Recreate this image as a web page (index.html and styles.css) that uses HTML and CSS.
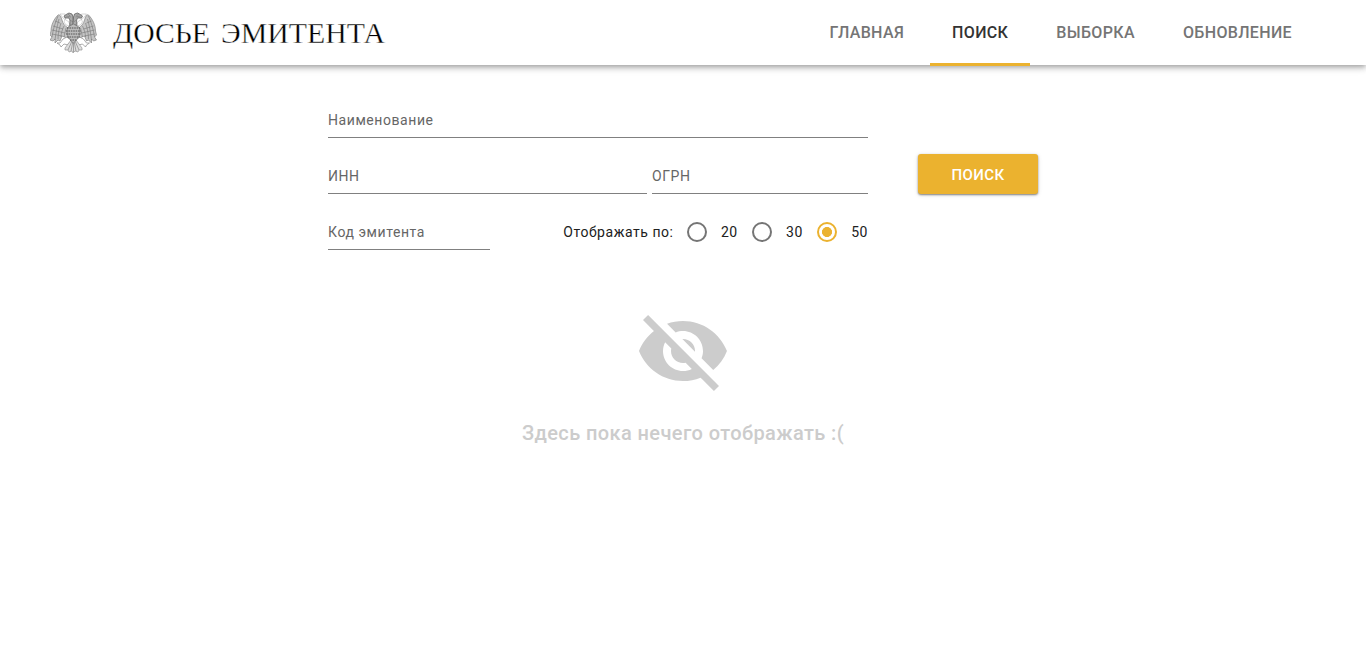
FILE: index.html
```html
<!DOCTYPE html>
<html lang="ru">
<head>
<meta charset="utf-8">
<title>Досье эмитента</title>
<link rel="stylesheet" href="styles.css">
</head>
<body>
<header class="header">
  <a class="brand">
    <svg class="eagle" viewBox="0 0 48 42">
      <defs>
        <g id="half">
          <path class="plume" d="M18 16C15 14 13 12 12 8C11 5 10 2 8 3C4 7 1 13 1 19L0 23L2 25L0 28L3 29L5 27L5 31L8 28L10 29L12 24L17 26L23 27V14Z"/>
          <path class="feather" d="M8 4C5 11 3 18 2 25M9 7C7 14 6 20 5 28M11 11C9 17 8 22 8 27M14 14C12 18 11 22 11 25M16 16L14 25M5 9L10 11M3 14L13 17M2 18L15 21M2 22L12 24"/>
          <path class="neck" d="M10 2L15 2L16 5L14 10L16 13L20 14L19 10L13 6Z"/>
          <path class="head" d="M20 15C19 11 21 9 19 6L15 6L14 4L17 2L19 1L22 2L23 5L24 15Z"/>
          <path class="feather" d="M16 4L21 5M18 2L20 4M20 8L23 10M20 12L23 14"/>
          <path class="claw" d="M17 25L13 27L10 31L7 31L10 33L11 35L14 32L18 33L20 30"/>
        </g>
      </defs>
      <use href="#half"/>
      <use href="#half" transform="translate(46.500 0) scale(-1 1)"/>
      <path class="tail" d="M21 28L15 36L15 38L18 38L19 40L22 39L23 41L25 39L28 40L29 38L32 38L32 36L26 28Z"/>
      <path class="feather" d="M22 29L18 38M23 29L21 39M23.500 29V40M24 29L26 39M25 29L29 38"/>
      <path class="body" d="M18 15C16 20 17 26 23.300 31C30 26 31 20 29 15L23.300 12Z"/>
      <path class="scales" d="M17 16H30M16 19H31M16 22H31M17 25H30M20 28H27"/>
    </svg>
    <svg class="title" viewBox="0 0 276 44">
      <text x="1" y="32.200" textLength="97" lengthAdjust="spacingAndGlyphs">ДОСЬЕ</text>
      <text x="109" y="32.200" textLength="164" lengthAdjust="spacingAndGlyphs">ЭМИТЕНТА</text>
    </svg>
  </a>
  <nav class="tabs">
    <a class="tab">ГЛАВНАЯ</a>
    <a class="tab active">ПОИСК</a>
    <a class="tab">ВЫБОРКА</a>
    <a class="tab">ОБНОВЛЕНИЕ</a>
  </nav>
</header>
<main class="content">
  <form class="search">
    <div class="fields">
      <label class="field">Наименование</label>
      <div class="row">
        <label class="field inn">ИНН</label>
        <label class="field ogrn">ОГРН</label>
      </div>
      <div class="row spread">
        <label class="field code">Код эмитента</label>
        <div class="options">
          <span class="caption">Отображать по:</span>
          <span class="radio"></span><span class="count">20</span>
          <span class="radio"></span><span class="count">30</span>
          <span class="radio checked"></span><span class="count">50</span>
        </div>
      </div>
    </div>
    <button class="submit" type="button">ПОИСК</button>
  </form>
  <section class="empty">
    <svg class="eye" viewBox="0 0 24 24"><path d="M12 7c2.760 0 5 2.240 5 5 0 .65-.13 1.260-.36 1.830l2.920 2.920c1.510-1.260 2.700-2.890 3.430-4.750-1.730-4.390-6-7.500-11-7.500-1.400 0-2.740.25-3.980.7l2.160 2.160C10.740 7.130 11.350 7 12 7zM2 4.270l2.280 2.280.46.46C3.080 8.300 1.780 10.020 1 12c1.730 4.390 6 7.500 11 7.500 1.550 0 3.030-.3 4.380-.84l.42.42L19.730 22 21 20.730 3.270 3 2 4.270zM7.530 9.800l1.550 1.550c-.05.21-.08.43-.08.65 0 1.660 1.340 3 3 3 .22 0 .44-.03.65-.08l1.550 1.550c-.67.33-1.410.53-2.200.53-2.760 0-5-2.240-5-5 0-.79.2-1.530.53-2.200zm4.310-.78l3.150 3.150.02-.16c0-1.660-1.340-3-3-3l-.17.01z"/></svg>
    <p class="message">Здесь пока нечего отображать :(</p>
  </section>
</main>
</body>
</html>
```
FILE: styles.css
```css
* { box-sizing: border-box; }
body { margin: 0; background: #fff; font-family: Roboto, "Noto Sans", sans-serif; color: #212121; }
.header { height: 65px; display: flex; justify-content: space-between; padding: 0 50px; background: #fff; box-shadow: 0 2px 4px -1px rgba(0,0,0,.2), 0 4px 5px 0 rgba(0,0,0,.14), 0 1px 10px 0 rgba(0,0,0,.12); }
.brand { display: flex; align-items: center; gap: 14px; }
.eagle { width: 48px; height: 42px; }
.title { width: 276px; height: 44px; font-family: "Liberation Serif", serif; font-size: 29px; fill: #000; stroke: #fff; stroke-width: .35px; }
.plume { fill: #c4c4c4; stroke: #777; stroke-width: .6; }
.body { fill: #bbb; stroke: #666; stroke-width: .6; }
.neck { fill: #fff; stroke: #aaa; stroke-width: .5; }
.head { fill: #aaa; stroke: #555; stroke-width: .7; }
.tail { fill: #ddd; stroke: #888; stroke-width: .6; }
.feather { fill: none; stroke: #777; stroke-width: .6; }
.claw { fill: #fff; stroke: #888; stroke-width: .7; }
.scales { fill: none; stroke: #555; stroke-width: 1.2; stroke-dasharray: 1.6 .8; }
.tabs { display: flex; }
.tab { position: relative; height: 66px; padding: 0 24px; line-height: 65px; font-size: 16px; font-weight: 500; letter-spacing: .35px; color: #757575; }
.tab.active { color: #333; }
.tab.active::after { content: ""; position: absolute; left: 2px; right: 2px; bottom: 0; height: 3px; background: #ebb22f; }
.content { width: 710px; margin: 0 auto; padding-top: 33px; }
.search { display: flex; align-items: flex-start; gap: 50px; }
.fields { width: 540px; display: flex; flex-direction: column; gap: 16px; }
.row { display: flex; gap: 5px; }
.spread { justify-content: space-between; }
.field { height: 40px; padding-top: 10px; border-bottom: 1px solid #808080; font-size: 14px; line-height: 24px; letter-spacing: .57px; color: #666; }
.inn { width: 319px; }
.ogrn { width: 216px; }
.code { width: 162px; }
.options { height: 44px; display: flex; align-items: center; font-size: 14px; letter-spacing: .55px; }
.caption { margin-right: 13px; }
.radio { width: 20px; height: 20px; border: 2px solid #757575; border-radius: 50%; margin-right: 14.300px; }
.count + .radio { margin-left: 14px; }
.radio.checked { border-color: #ebb22f; background: radial-gradient(circle, #ebb22f 4.700px, transparent 5.300px); }
.submit { width: 120px; height: 40px; margin-top: 56px; padding: 2px 0 0; border: 0; border-radius: 3px; background: #ebb22f; color: #fff; font: 500 15px Roboto, sans-serif; letter-spacing: .4px; box-shadow: 0 1px 2px rgba(0,0,0,.45), 0 1px 5px rgba(0,0,0,.12); }
.empty { display: flex; flex-direction: column; align-items: center; margin-top: 49px; }
.eye { width: 96px; height: 96px; fill: #ccc; }
.message { margin: 20px 0 0; font-size: 20px; font-weight: 500; line-height: 28px; letter-spacing: .4px; color: #ccc; }
```
